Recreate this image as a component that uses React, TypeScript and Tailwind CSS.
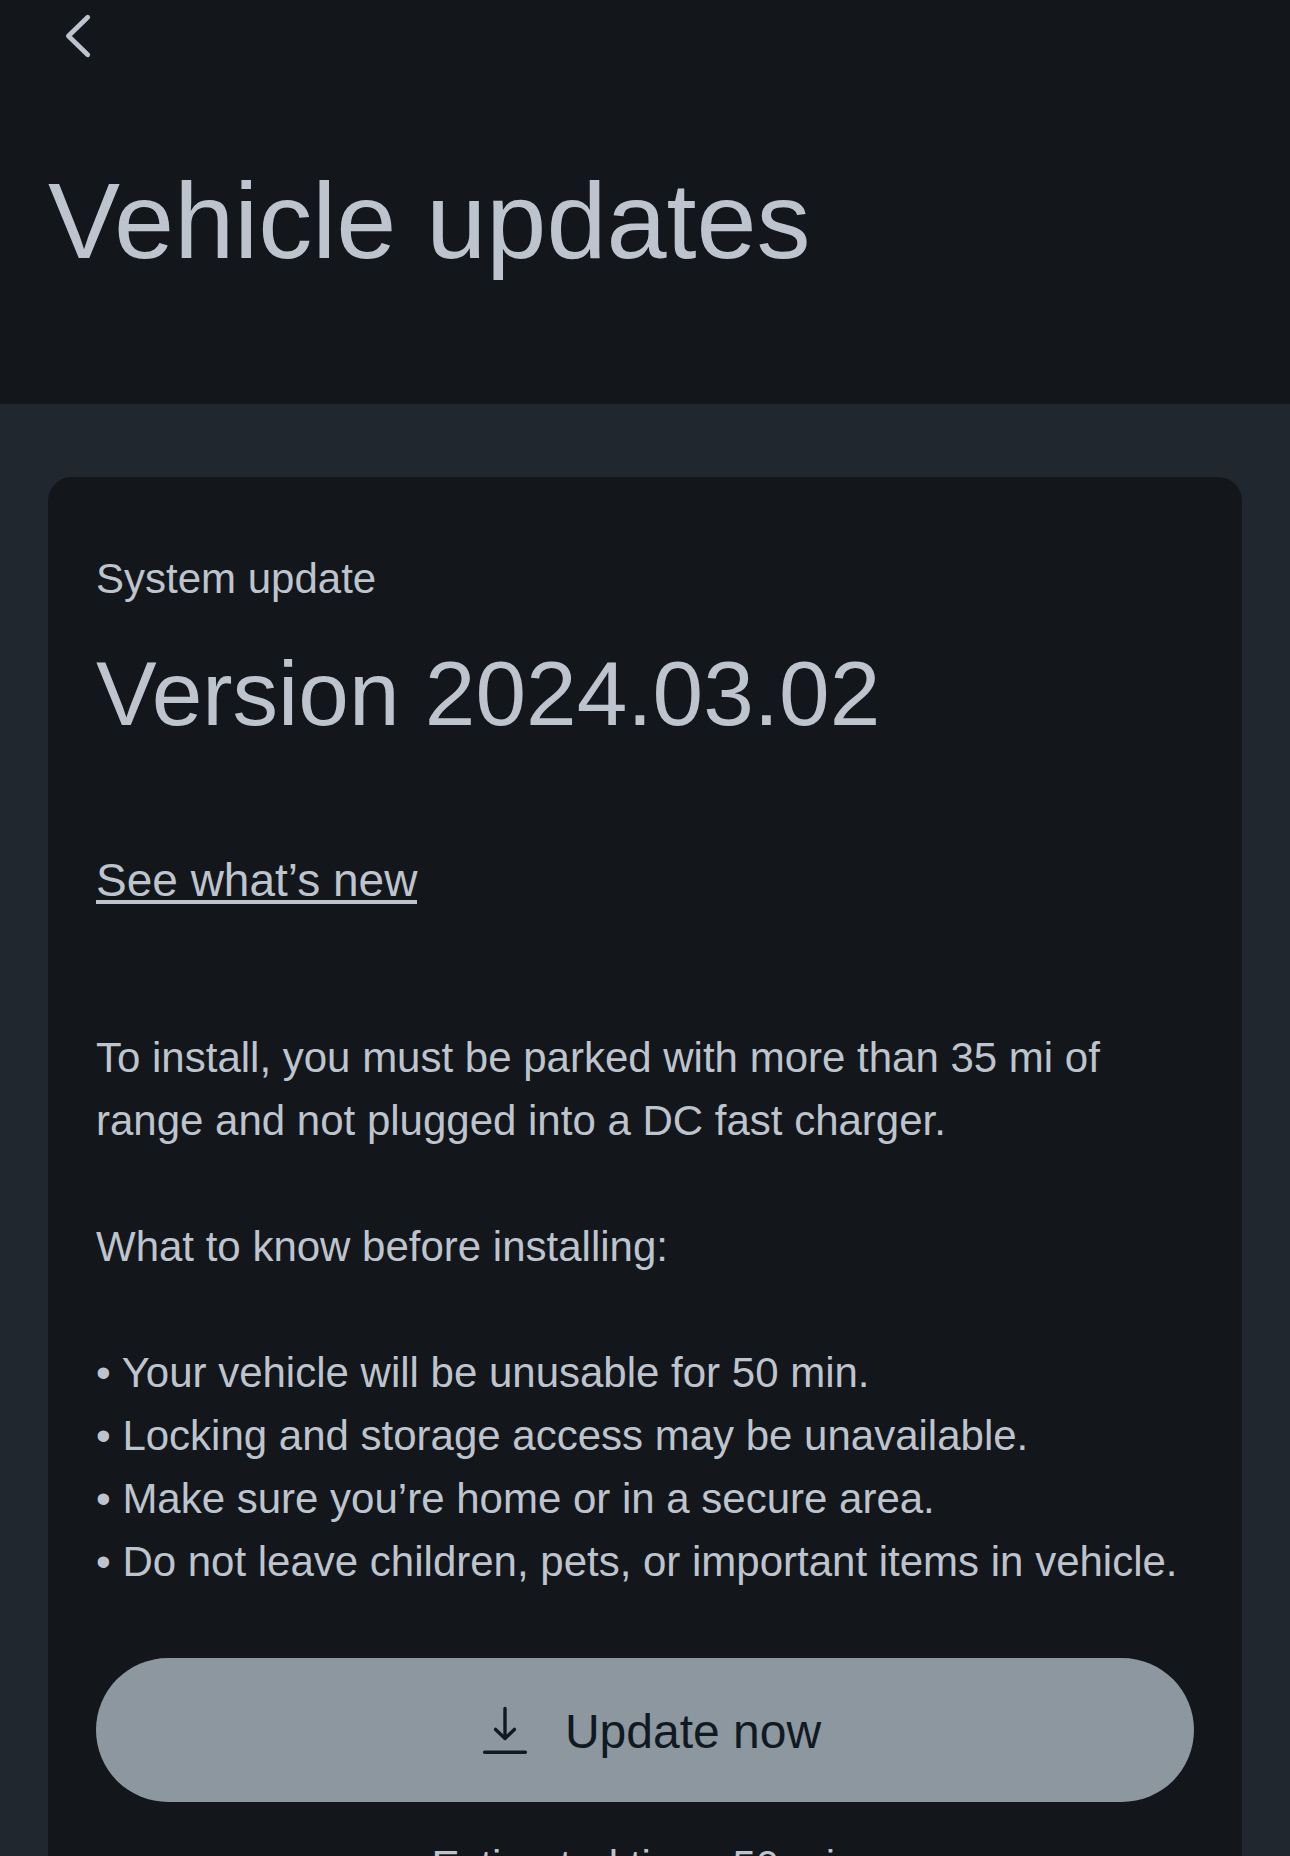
import React from "react";

const notes = [
  "Your vehicle will be unusable for 50 min.",
  "Locking and storage access may be unavailable.",
  "Make sure you’re home or in a secure area.",
  "Do not leave children, pets, or important items in vehicle.",
];

const BackIcon: React.FC = () => (
  <svg
    className="h-12 w-12"
    viewBox="0 0 48 48"
    fill="none"
    stroke="currentColor"
    strokeWidth="4.8"
    strokeLinecap="round"
    strokeLinejoin="round"
    aria-hidden="true"
  >
    <path d="M33.7 5.2 14.4 24l19.3 18.8" />
  </svg>
);

const DownloadIcon: React.FC = () => (
  <svg
    className="h-12 w-12 shrink-0"
    viewBox="0 0 48 48"
    fill="none"
    stroke="currentColor"
    strokeWidth="3.4"
    strokeLinecap="round"
    strokeLinejoin="round"
    aria-hidden="true"
  >
    <path d="M24 2.5v29.8M14.6 23.4l9.4 9 9.4-9M3.6 46.3h40.8" />
  </svg>
);

const App: React.FC = () => {
  return (
    <div className="flex h-screen flex-col overflow-hidden bg-[#20272e] font-['Liberation_Sans',Arial,sans-serif] text-[#bec4cd]">
      <header className="bg-[#13171b] px-12 pt-3 pb-[123px]">
        <button type="button" aria-label="Back" className="ml-1.5 block">
          <BackIcon />
        </button>
        <h1 className="mt-[101px] text-[108px] leading-[120px]">
          Vehicle updates
        </h1>
      </header>
      <main className="grow px-12 pt-[73px]">
        <section className="min-h-full rounded-t-3xl bg-[#13171b] px-12 pt-[70px] pb-12">
          <p className="text-[42px] leading-[63px]">System update</p>
          <h2 className="mt-8 text-[91px] leading-[104px]">
            Version 2024.03.02
          </h2>
          <a
            href="#whats-new"
            className="mt-[114px] inline-block border-b-4 border-current text-[46px] leading-[40px]"
          >
            See what’s new
          </a>
          <div className="mt-[122px] text-[42px] leading-[63px]">
            <p>
              To install, you must be parked with more than 35 mi of range and
              not plugged into a DC fast charger.
            </p>
            <p className="mt-[63px]">What to know before installing:</p>
            <ul className="mt-[63px]">
              {notes.map((note) => (
                <li key={note}>• {note}</li>
              ))}
            </ul>
          </div>
          <button
            type="button"
            className="mt-[65px] flex h-36 w-full items-center justify-center gap-9 rounded-full bg-[#8d979f] pl-3 text-[48px] leading-[56px] text-[#111a22]"
          >
            <DownloadIcon />
            <span className="pt-1">Update now</span>
          </button>
          <p className="mt-8 text-center text-[42px] leading-[63px]">
            Estimated time: 50 min
          </p>
        </section>
      </main>
    </div>
  );
};

export default App;
